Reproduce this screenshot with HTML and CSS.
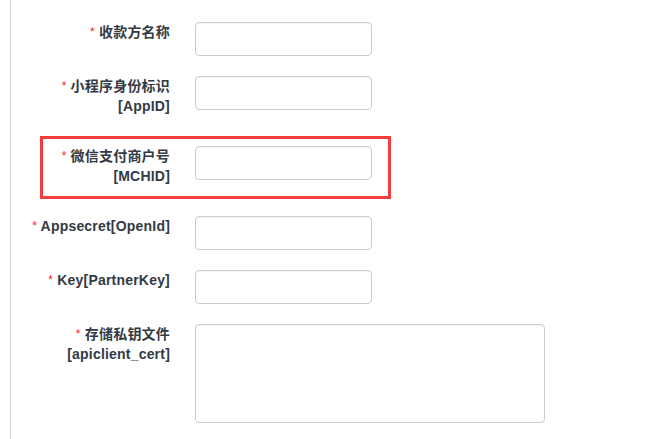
FILE: index.html
```html
<!DOCTYPE html>
<html lang="zh-CN">
<head>
<meta charset="utf-8">
<title>支付配置</title>
<link rel="stylesheet" href="styles.css">
</head>
<body>
<div class="panel">
  <form class="form">
    <div class="row">
      <label class="label"><span class="req">*</span> 收款方名称</label>
      <input class="input" type="text">
    </div>
    <div class="row">
      <label class="label"><span class="req">*</span> 小程序身份标识<br>[AppID]</label>
      <input class="input" type="text">
    </div>
    <div class="row marked">
      <label class="label"><span class="req">*</span> 微信支付商户号<br>[MCHID]</label>
      <input class="input" type="text">
      <div class="highlight"></div>
    </div>
    <div class="row">
      <label class="label"><span class="req">*</span> Appsecret[OpenId]</label>
      <input class="input" type="text">
    </div>
    <div class="row">
      <label class="label"><span class="req">*</span> Key[PartnerKey]</label>
      <input class="input" type="text">
    </div>
    <div class="row">
      <label class="label"><span class="req">*</span> 存储私钥文件<br>[apiclient_cert]</label>
      <textarea class="textarea"></textarea>
    </div>
  </form>
</div>
</body>
</html>
```
FILE: styles.css
```css
html, body {
  margin: 0;
  padding: 0;
  background: #ffffff;
}
body {
  width: 662px;
  height: 439px;
  overflow: hidden;
  font-family: "Liberation Sans", Arial, "Noto Sans CJK SC", sans-serif;
}
.panel {
  margin-left: 10px;
  border-left: 1px solid #d2d2d2;
  height: 439px;
  box-sizing: border-box;
  padding-top: 22px;
}
.form {
  margin: 0;
  display: flex;
  flex-direction: column;
  gap: 20px;
}
.row {
  display: flex;
  align-items: flex-start;
  gap: 25px;
}
.marked {
  position: relative;
}
.label {
  width: 159px;
  flex: none;
  text-align: right;
  font-size: 14px;
  font-weight: bold;
  line-height: 20px;
  color: #333a44;
  padding-bottom: 10px;
  letter-spacing: 0.2px;
}
.req {
  color: #f0262b;
  font-size: 12px;
  font-weight: normal;
  vertical-align: 1px;
}
.input {
  flex: none;
  width: 177px;
  height: 34px;
  box-sizing: border-box;
  margin: 0;
  padding: 6px 12px;
  border: 1px solid #cccccc;
  border-radius: 4px;
  background: #ffffff;
  font-size: 14px;
  box-shadow: inset 0 1px 1px rgba(0,0,0,0.04);
}
.textarea {
  flex: none;
  width: 350px;
  height: 99px;
  box-sizing: border-box;
  margin: 0;
  padding: 6px 12px;
  border: 1px solid #cccccc;
  border-radius: 4px;
  background: #ffffff;
  resize: none;
  font-size: 14px;
  box-shadow: inset 0 1px 1px rgba(0,0,0,0.04);
}
.highlight {
  position: absolute;
  left: 29px;
  top: -10px;
  width: 351px;
  height: 63px;
  box-sizing: border-box;
  border: 3px solid #f33c3c;
  pointer-events: none;
}
```
